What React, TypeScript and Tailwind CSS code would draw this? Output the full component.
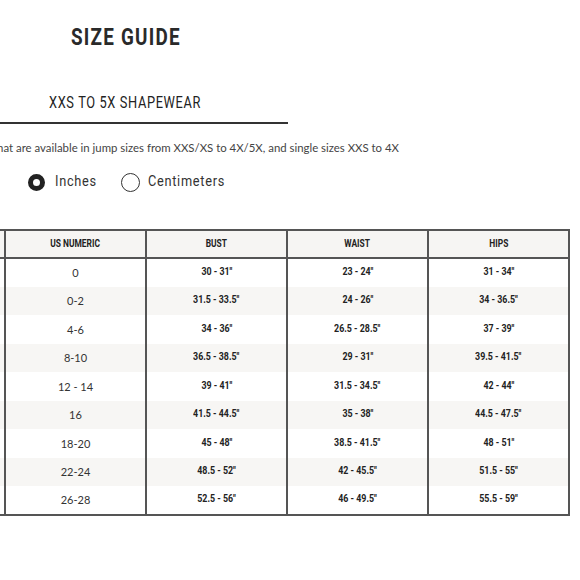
import React from "react";

const rob = { fontFamily: 'Roboto, "DejaVu Sans", sans-serif' };
const lato = { fontFamily: 'Lato, "Noto Sans", sans-serif' };

const rows: [string, string, string, string, string][] = [
  ["XXS", "0", "30 - 31\"", "23 - 24\"", "31 - 34\""],
  ["XS", "0-2", "31.5 - 33.5\"", "24 - 26\"", "34 - 36.5\""],
  ["S", "4-6", "34 - 36\"", "26.5 - 28.5\"", "37 - 39\""],
  ["M", "8-10", "36.5 - 38.5\"", "29 - 31\"", "39.5 - 41.5\""],
  ["L", "12 - 14", "39 - 41\"", "31.5 - 34.5\"", "42 - 44\""],
  ["XL", "16", "41.5 - 44.5\"", "35 - 38\"", "44.5 - 47.5\""],
  ["1X", "18-20", "45 - 48\"", "38.5 - 41.5\"", "48 - 51\""],
  ["2X", "22-24", "48.5 - 52\"", "42 - 45.5\"", "51.5 - 55\""],
  ["3X", "26-28", "52.5 - 56\"", "46 - 49.5\"", "55.5 - 59\""],
];

function Num({ children }: { children: React.ReactNode }) {
  return (
    <div className="flex items-center justify-center">
      <span className="inline-block scale-x-[0.82] origin-center text-[10.8px] leading-none font-bold text-[#222]" style={rob}>
        {children}
      </span>
    </div>
  );
}

export default function App() {
  return (
    <div className="w-[580px] h-[580px] overflow-hidden bg-white text-[#2b2b2b]">
      <div className="flex pt-[27px] pl-[71px]">
        <h1 className="inline-block origin-left scale-x-[0.82] text-[23px] font-bold tracking-[1.5px] leading-[22px] text-[#2a2a2a]" style={rob}>SIZE GUIDE</h1>
      </div>
      <div className="flex mt-[47px] w-[288px] border-b-2 border-[#333] pb-[12px] pl-[49px]">
        <span className="inline-block origin-left scale-x-[0.8] text-[16px] tracking-[0.8px] leading-[14px] text-[#222]" style={rob}>XXS TO 5X SHAPEWEAR</span>
      </div>
      <p className="mt-[16px] ml-[-7px] whitespace-nowrap text-[11.4px] text-[#444] leading-[16px]" style={lato}>
        that are available in jump sizes from XXS/XS to 4X/5X, and single sizes XXS to 4X
      </p>
      <div className="mt-[16px] flex items-center pl-[28px] h-[20px]">
        <span className="w-[17px] h-[17px] rounded-full border-[5px] border-[#222] bg-white" />
        <span className="flex ml-[10px] w-[66px]">
          <span className="inline-block origin-left scale-x-[0.88] text-[14.5px] leading-none tracking-[0.8px] text-[#333]" style={rob}>Inches</span>
        </span>
        <span className="w-[19px] h-[19px] rounded-full border-[1.5px] border-[#333] bg-white" />
        <span className="flex ml-[8px]">
          <span className="inline-block origin-left scale-x-[0.88] text-[14.5px] leading-none tracking-[0.8px] text-[#333]" style={rob}>Centimeters</span>
        </span>
      </div>
      <table className="mt-[37px] ml-[-137px] border-collapse table-fixed">
        <thead>
          <tr className="bg-[#f6f5f3] h-[28px]">
            {["SIZE", "US NUMERIC", "BUST", "WAIST", "HIPS"].map((h) => (
              <th key={h} className="w-[141px] border-2 border-[#555] p-0 align-middle">
                <div className="flex items-center justify-center">
                  <span className="inline-block scale-x-[0.8] origin-center text-[10.5px] leading-none font-bold text-[#222]" style={rob}>{h}</span>
                </div>
              </th>
            ))}
          </tr>
        </thead>
        <tbody>
          {rows.map((r, i) => (
            <tr key={i} className={i % 2 === 1 ? "bg-[#f7f6f4] h-[28.5px]" : "bg-white h-[28.5px]"}>
              <td className="border-x-2 border-[#555] p-0 align-middle"><Num>{r[0]}</Num></td>
              <td className="border-x-2 border-[#555] p-0 align-middle">
                <div className="flex items-center justify-center text-[11px] leading-none text-[#333]" style={lato}>{r[1]}</div>
              </td>
              <td className="border-x-2 border-[#555] p-0 align-middle"><Num>{r[2]}</Num></td>
              <td className="border-x-2 border-[#555] p-0 align-middle"><Num>{r[3]}</Num></td>
              <td className="border-x-2 border-[#555] p-0 align-middle"><Num>{r[4]}</Num></td>
            </tr>
          ))}
          <tr className="h-0"><td colSpan={5} className="border-t-2 border-[#555] p-0" /></tr>
        </tbody>
      </table>
    </div>
  );
}
